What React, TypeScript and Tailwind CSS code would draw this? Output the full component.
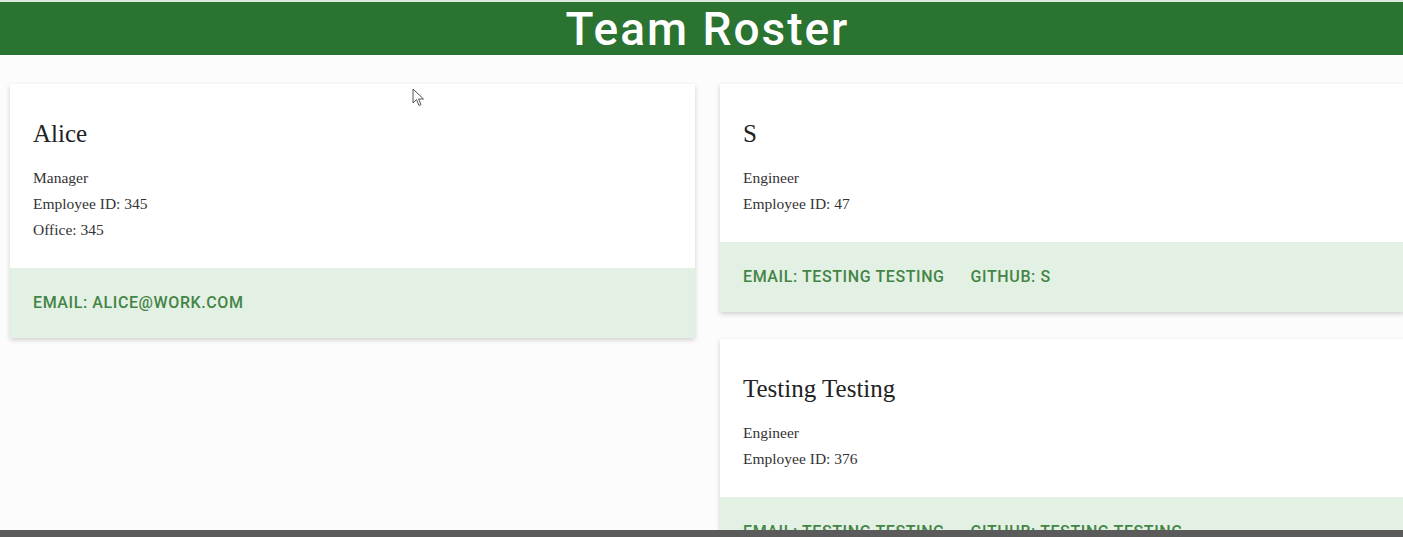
import React from 'react';

type Employee = {
  name: string;
  role: string;
  id: number;
  office?: number;
  email: string;
  github?: string;
};

const left: Employee[] = [{ name: 'Alice', role: 'Manager', id: 345, office: 345, email: 'alice@work.com' }];

const right: Employee[] = [
  { name: 'S', role: 'Engineer', id: 47, email: 'testing testing', github: 's' },
  { name: 'Testing Testing', role: 'Engineer', id: 376, email: 'testing testing', github: 'testing testing' },
];

function Card({ emp }: { emp: Employee }) {
  return (
    <div className="bg-white shadow-[0_2px_5px_rgba(0,0,0,0.18)]">
      <div className="px-[23px] pt-8 pb-[25px]">
        <h2 className="text-[25px] leading-[36px] text-[#222] mb-[13px] font-['Liberation_Serif',serif]">{emp.name}</h2>
        <div className="text-[15.5px] leading-[26px] text-[#333] font-['Liberation_Serif',serif]">
          <p>{emp.role}</p>
          <p>Employee ID: {emp.id}</p>
          {emp.office !== undefined && <p>Office: {emp.office}</p>}
        </div>
      </div>
      <div className="h-[70px] bg-[#e3f0e4] px-[23px] flex items-center gap-[26px] text-[16px] tracking-[0.6px] font-medium uppercase text-[#438545] font-['Roboto',sans-serif]">
        <span>Email: {emp.email}</span>
        {emp.github && <span>Github: {emp.github}</span>}
      </div>
    </div>
  );
}

export default function App() {
  return (
    <div className="relative h-[537px] overflow-hidden bg-[#fcfcfc]">
      <div className="h-[2px] bg-[#dfe8dc]" />
      <header className="h-[53px] bg-[#2a7331] flex items-center justify-center pl-3">
        <h1 className="text-[46px] leading-none font-medium text-white font-['Roboto',sans-serif] tracking-[2px]">Team Roster</h1>
      </header>
      <main className="grid grid-cols-[685px_685px] gap-x-[25px] pl-[10px] pt-[29px]">
        <div className="flex flex-col gap-[27px]">
          {left.map((e) => (
            <Card key={e.name} emp={e} />
          ))}
        </div>
        <div className="flex flex-col gap-[27px]">
          {right.map((e) => (
            <Card key={e.name} emp={e} />
          ))}
        </div>
      </main>
      <svg className="absolute left-[412px] top-[88px]" width="14" height="20" viewBox="0 0 14 20">
        <path d="M1 1 L1 15 L4.5 11.5 L7 17.5 L9 16.6 L6.6 11 L11.5 11 Z" fill="#fff" stroke="#555" strokeWidth="1" strokeLinejoin="round" />
      </svg>
      <div className="absolute left-0 right-0 bottom-0 h-[7px] bg-[#5b5b5b]" />
    </div>
  );
}
